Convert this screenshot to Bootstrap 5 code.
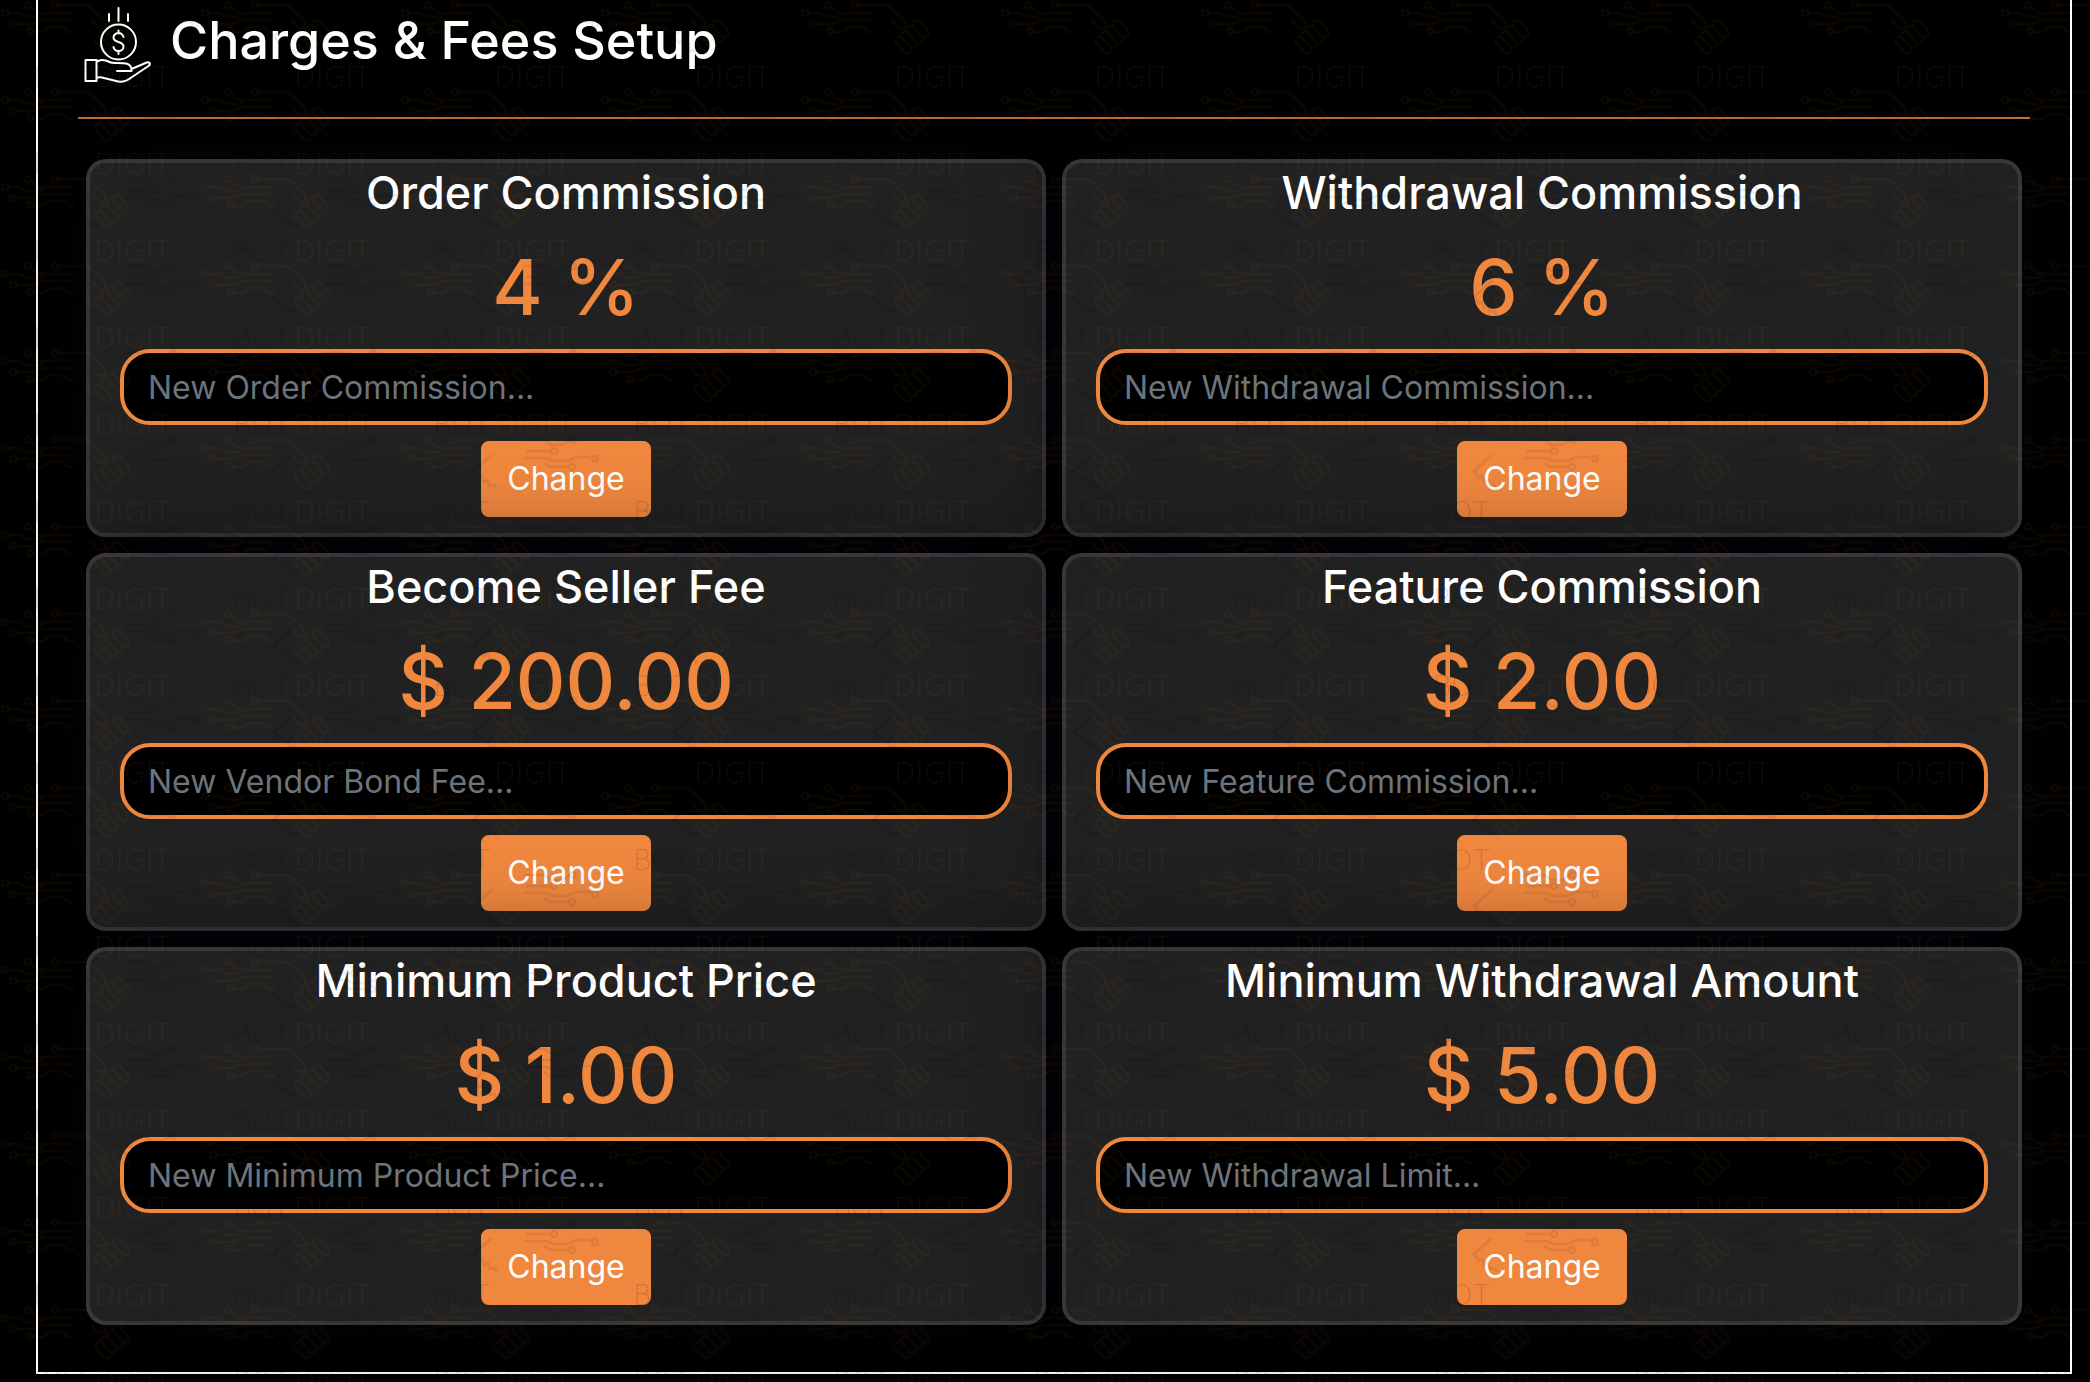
<!DOCTYPE html>
<html lang="en">
<head>
<meta charset="utf-8">
<meta name="viewport" content="width=device-width, initial-scale=1">
<title>Charges &amp; Fees Setup</title>
<link href="https://cdn.jsdelivr.net/npm/bootstrap@5.3.0/dist/css/bootstrap.min.css" rel="stylesheet">
<style>
  :root { --brand: #ef873f; }
  body { background: #000; color: #fff; font-family: Inter, "Liberation Sans", sans-serif; font-size: 32px; line-height: 48px; }
  .panel { margin: 0 18px 8px 36px; padding: 0 40px 47px; border: 2px solid #fff; border-top: 0; }
  .panel-head { height: 85px; gap: 12px; }
  .panel-head svg { width: 80px; height: 80px; }
  .panel-title { font-size: 52px; line-height: 68px; margin: 0 0 4px; }
  .rule { margin: 32px 0 40px; border: 0; height: 2px; background: var(--brand); opacity: .85; }
  .fee-grid { --bs-gutter-x: 16px; --bs-gutter-y: 16px; }
  .fee-card { background: rgba(255,255,255,.13); border: 4px solid rgba(255,255,255,.1); border-radius: 20px; box-shadow: 0 0 80px rgba(8,7,16,.6); padding: 0 30px 16px; color: #fff; }
  .fee-name { font-size: 45px; line-height: 60px; margin: 0 0 16px; }
  .fee-value { font-size: 77px; line-height: 96px; font-weight: 500; margin: 0 0 14px; color: var(--brand); }
  .fee-input, .fee-input:focus { height: 76px; padding: 10px 24px; background: #000; border: 4px solid var(--brand); border-radius: 30px; color: #fff; font-size: 32px; line-height: 48px; }
  .fee-input::placeholder { color: #6c757d; opacity: 1; }
  .btn-brand, .btn-brand:hover { height: 76px; padding: 12px 24px; border: 2px solid var(--brand); border-radius: 8px; background: var(--brand); color: #fff; font-size: 32px; line-height: 48px; }
  .watermark { pointer-events: none; z-index: 10; }
  .watermark text { font-family: "DejaVu Sans", sans-serif; font-weight: 200; font-size: 28px; }
</style>
</head>
<body>
<main class="panel">
  <header class="panel-head d-flex align-items-center">
    <svg viewBox="0 0 80 80" fill="none" stroke="#fff" stroke-width="2" stroke-linejoin="round" stroke-linecap="round" aria-hidden="true">
      <path d="M31 11v7M40.500 5v13M50 11v7"/>
      <circle cx="40.500" cy="39" r="17.500"/>
      <path d="M45.500 34c-1-3-3-4-5-4s-5 1.500-5 4.500c0 6 10 3 10 9 0 3-2.500 4.500-5 4.500s-4.500-1.500-5-4M40.500 27.500v3M40.500 48v3"/>
      <path d="M7.500 57h11v21h-11zM18.500 59c4-3 9-2 13 0 2 1 4 1 8 1 8 0 13 0 14 6v2H39M53.500 66l14-6c4-2 6 1 3 3L54 74c-5 4-10 6-16 4l-12-3c-3-1-5-1-7.500 0"/>
    </svg>
    <h1 class="panel-title">Charges &amp; Fees Setup</h1>
  </header>
  <hr class="rule">
  <div class="row row-cols-2 fee-grid mx-0" id="fees">
    <div class="col"><form class="card fee-card text-center align-items-center"><h2 class="fee-name">Order Commission</h2><p class="fee-value">4 %</p><input class="form-control fee-input mb-3" aria-label="New Order Commission" placeholder="New Order Commission..."><button type="button" class="btn btn-brand">Change</button></form></div>
    <div class="col"><form class="card fee-card text-center align-items-center"><h2 class="fee-name">Withdrawal Commission</h2><p class="fee-value">6 %</p><input class="form-control fee-input mb-3" aria-label="New Withdrawal Commission" placeholder="New Withdrawal Commission..."><button type="button" class="btn btn-brand">Change</button></form></div>
    <div class="col"><form class="card fee-card text-center align-items-center"><h2 class="fee-name">Become Seller Fee</h2><p class="fee-value">$ 200.00</p><input class="form-control fee-input mb-3" aria-label="New Vendor Bond Fee" placeholder="New Vendor Bond Fee..."><button type="button" class="btn btn-brand">Change</button></form></div>
    <div class="col"><form class="card fee-card text-center align-items-center"><h2 class="fee-name">Feature Commission</h2><p class="fee-value">$ 2.00</p><input class="form-control fee-input mb-3" aria-label="New Feature Commission" placeholder="New Feature Commission..."><button type="button" class="btn btn-brand">Change</button></form></div>
    <div class="col"><form class="card fee-card text-center align-items-center"><h2 class="fee-name">Minimum Product Price</h2><p class="fee-value">$ 1.00</p><input class="form-control fee-input mb-3" aria-label="New Minimum Product Price" placeholder="New Minimum Product Price..."><button type="button" class="btn btn-brand">Change</button></form></div>
    <div class="col"><form class="card fee-card text-center align-items-center"><h2 class="fee-name">Minimum Withdrawal Amount</h2><p class="fee-value">$ 5.00</p><input class="form-control fee-input mb-3" aria-label="New Withdrawal Limit" placeholder="New Withdrawal Limit..."><button type="button" class="btn btn-brand">Change</button></form></div>
  </div>
</main>

<!-- Brand watermark tiled over the whole window -->
<svg class="watermark position-fixed top-0 start-0 w-100 h-100" aria-hidden="true">
  <defs>
    <pattern id="tile" x="0" y="-24" width="200" height="87" patternUnits="userSpaceOnUse">
      <g transform="translate(0 4)">
        <g fill="none" stroke="#ff8200" stroke-opacity=".045" stroke-width="2.600">
          <path d="M58 25h30l14 13c5 5 4 11-1 10-4 0-7-4-9-9M31 27l8 6h33M8 33h12l6 4h14l6-4M16 44h17l9-4h30M33 52h10l6-5h14l5 5h6"/>
          <circle cx="28" cy="25" r="3"/><circle cx="55" cy="25" r="3"/><circle cx="5" cy="33" r="3"/><circle cx="13" cy="44" r="3"/><circle cx="30" cy="51" r="3"/>
          <g transform="translate(112 57) rotate(-42)"><path d="M-16-6a4 4 0 0 1 8 0a4 4 0 0 1 8 0a4 4 0 0 1 8 0a4 4 0 0 1 8 0v12a4 4 0 0 1-8 0a4 4 0 0 1-8 0a4 4 0 0 1-8 0a4 4 0 0 1-8 0zM-8-6v12M0-6v12M8-6v12"/></g>
        </g>
        <g fill="none" stroke="#000" stroke-opacity=".07" stroke-width="2.600">
          <path d="M124 25h20l8 5h10l8-5M126 36h24M124 43h22l8 3h14l8-4h15M144 48l6 4h18M92 40L74 56l5 7 3-2 2 6 4-2 2 6 4-1 3 4"/>
          <circle cx="173" cy="25" r="3"/><circle cx="154" cy="36" r="3"/><circle cx="195" cy="44" r="3"/><circle cx="172" cy="52" r="3"/>
        </g>
        <text x="90" y="20" text-anchor="end" fill="#000" fill-opacity=".12">BOT</text>
        <text x="94" y="20" fill="#ff8200" fill-opacity=".07">DIGIT</text>
      </g>
    </pattern>
  </defs>
  <rect width="100%" height="100%" fill="url(#tile)"/>
</svg>
<script src="https://cdn.jsdelivr.net/npm/bootstrap@5.3.0/dist/js/bootstrap.bundle.min.js"></script>
</body>
</html>
